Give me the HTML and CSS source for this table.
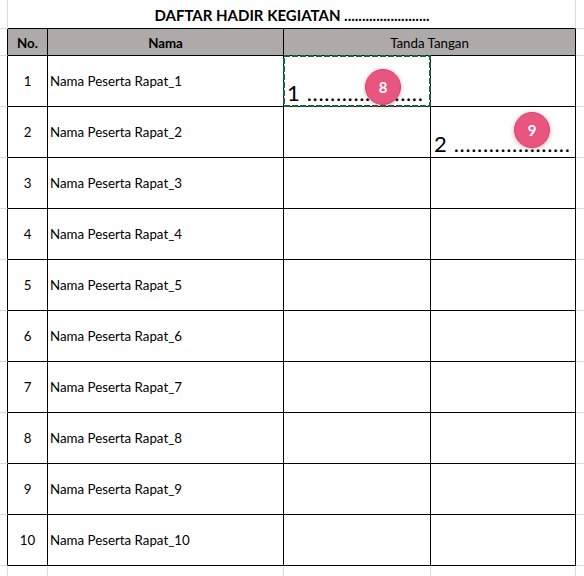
FILE: index.html
```html
<!DOCTYPE html>
<html>
<head>
<meta charset="utf-8">
<link rel="stylesheet" href="styles.css">
</head>
<body>
<div class="sheet">
  <div class="c ml mt"></div>
  <div class="c title">DAFTAR HADIR KEGIATAN ........................</div>
  <div class="c mr"></div>

  <div class="c ml"></div>
  <div class="c hd bold">No.</div>
  <div class="c hd bold">Nama</div>
  <div class="c hd span2">Tanda Tangan</div>
  <div class="c mr"></div>

  <div class="c ml"></div>
  <div class="c td no">1</div>
  <div class="c td name">Nama Peserta Rapat_1</div>
  <div class="c td sig sel">
    <span class="sigtext">1 ....................</span>
    <svg class="dash" viewBox="0 0 148 52" width="148" height="52" shape-rendering="crispEdges"><rect x="1" y="1" width="146" height="50" fill="none" stroke="#176439" stroke-width="2" stroke-dasharray="6 2"/></svg>
    <span class="badge b8">8</span>
  </div>
  <div class="c td"></div>
  <div class="c mr"></div>

  <div class="c ml"></div>
  <div class="c td no">2</div>
  <div class="c td name">Nama Peserta Rapat_2</div>
  <div class="c td"></div>
  <div class="c td sig">
    <span class="sigtext">2 ....................</span>
    <span class="badge b9">9</span>
  </div>
  <div class="c mr"></div>

  <div class="c ml"></div><div class="c td no">3</div><div class="c td name">Nama Peserta Rapat_3</div><div class="c td"></div><div class="c td"></div><div class="c mr"></div>
  <div class="c ml"></div><div class="c td no">4</div><div class="c td name">Nama Peserta Rapat_4</div><div class="c td"></div><div class="c td"></div><div class="c mr"></div>
  <div class="c ml"></div><div class="c td no">5</div><div class="c td name">Nama Peserta Rapat_5</div><div class="c td"></div><div class="c td"></div><div class="c mr"></div>
  <div class="c ml"></div><div class="c td no">6</div><div class="c td name">Nama Peserta Rapat_6</div><div class="c td"></div><div class="c td"></div><div class="c mr"></div>
  <div class="c ml"></div><div class="c td no">7</div><div class="c td name">Nama Peserta Rapat_7</div><div class="c td"></div><div class="c td"></div><div class="c mr"></div>
  <div class="c ml"></div><div class="c td no">8</div><div class="c td name">Nama Peserta Rapat_8</div><div class="c td"></div><div class="c td"></div><div class="c mr"></div>
  <div class="c ml"></div><div class="c td no">9</div><div class="c td name">Nama Peserta Rapat_9</div><div class="c td"></div><div class="c td"></div><div class="c mr"></div>
  <div class="c ml"></div><div class="c td no">10</div><div class="c td name">Nama Peserta Rapat_10</div><div class="c td"></div><div class="c td"></div><div class="c mr"></div>

  <div class="c ft"></div><div class="c ft"></div><div class="c ft"></div><div class="c ft"></div><div class="c ft"></div><div class="c ft last"></div>
</div>
</body>
</html>
```

FILE: styles.css
```css
html, body {
  margin: 0;
  padding: 0;
  background: #ffffff;
}
body {
  font-family: Lato, "Open Sans", sans-serif;
  color: #000;
  font-size: 13.3px;
}
.sheet {
  display: grid;
  grid-template-columns: 8px 40px 236px 147px 145px 8px;
  grid-template-rows: 29px 27px repeat(10, 51px) 10px;
  width: 584px;
  height: 576px;
  overflow: hidden;
}
.c {
  box-sizing: border-box;
  min-width: 0;
}
.ml {
  border-bottom: 1px solid #dadada;
  border-right: 1px solid #000;
}
.ml.mt {
  border-right: 1px solid #dadada;
}
.mr {
  border-bottom: 1px solid #dadada;
}
.title {
  grid-column: 2 / 6;
  border-bottom: 1px solid #000;
  border-right: 1px solid #dadada;
  font-weight: bold;
  font-size: 15px;
  display: flex;
  align-items: center;
  justify-content: center;
  padding-top: 1px;
  padding-left: 1px;
}
.hd {
  background: #aeaaaa;
  border-right: 1px solid #000;
  border-bottom: 1px solid #000;
  display: flex;
  align-items: center;
  justify-content: center;
  padding-top: 1px;
}
.bold {
  font-weight: bold;
}
.span2 {
  grid-column: span 2;
  color: #000;
}
.td {
  border-right: 1px solid #000;
  border-bottom: 1px solid #000;
  display: flex;
  align-items: center;
}
.no {
  justify-content: center;
}
.name {
  padding-left: 2px;
  white-space: nowrap;
}
.sig {
  position: relative;
  align-items: flex-end;
  padding-left: 3px;
}
.sigtext {
  font-size: 22px;
  line-height: 22px;
  white-space: nowrap;
  padding-bottom: 2px;
  letter-spacing: 0.65px;
}
.dash {
  position: absolute;
  left: -1px;
  top: -1px;
}
.badge {
  position: absolute;
  width: 36px;
  height: 36px;
  border-radius: 50%;
  box-sizing: border-box;
  background: #e8557f;
  border: 1px solid #e23f70;
  box-shadow: 0 1px 5px rgba(120, 40, 60, 0.35);
  color: #ffffff;
  font-weight: bold;
  font-size: 15px;
  display: flex;
  align-items: center;
  justify-content: center;
}
.b8 {
  left: 81px;
  top: 13px;
}
.b9 {
  left: 83px;
  top: 5px;
}
.ft {
  border-right: 1px solid #dadada;
}
.ft.last {
  border-right: none;
}
```
